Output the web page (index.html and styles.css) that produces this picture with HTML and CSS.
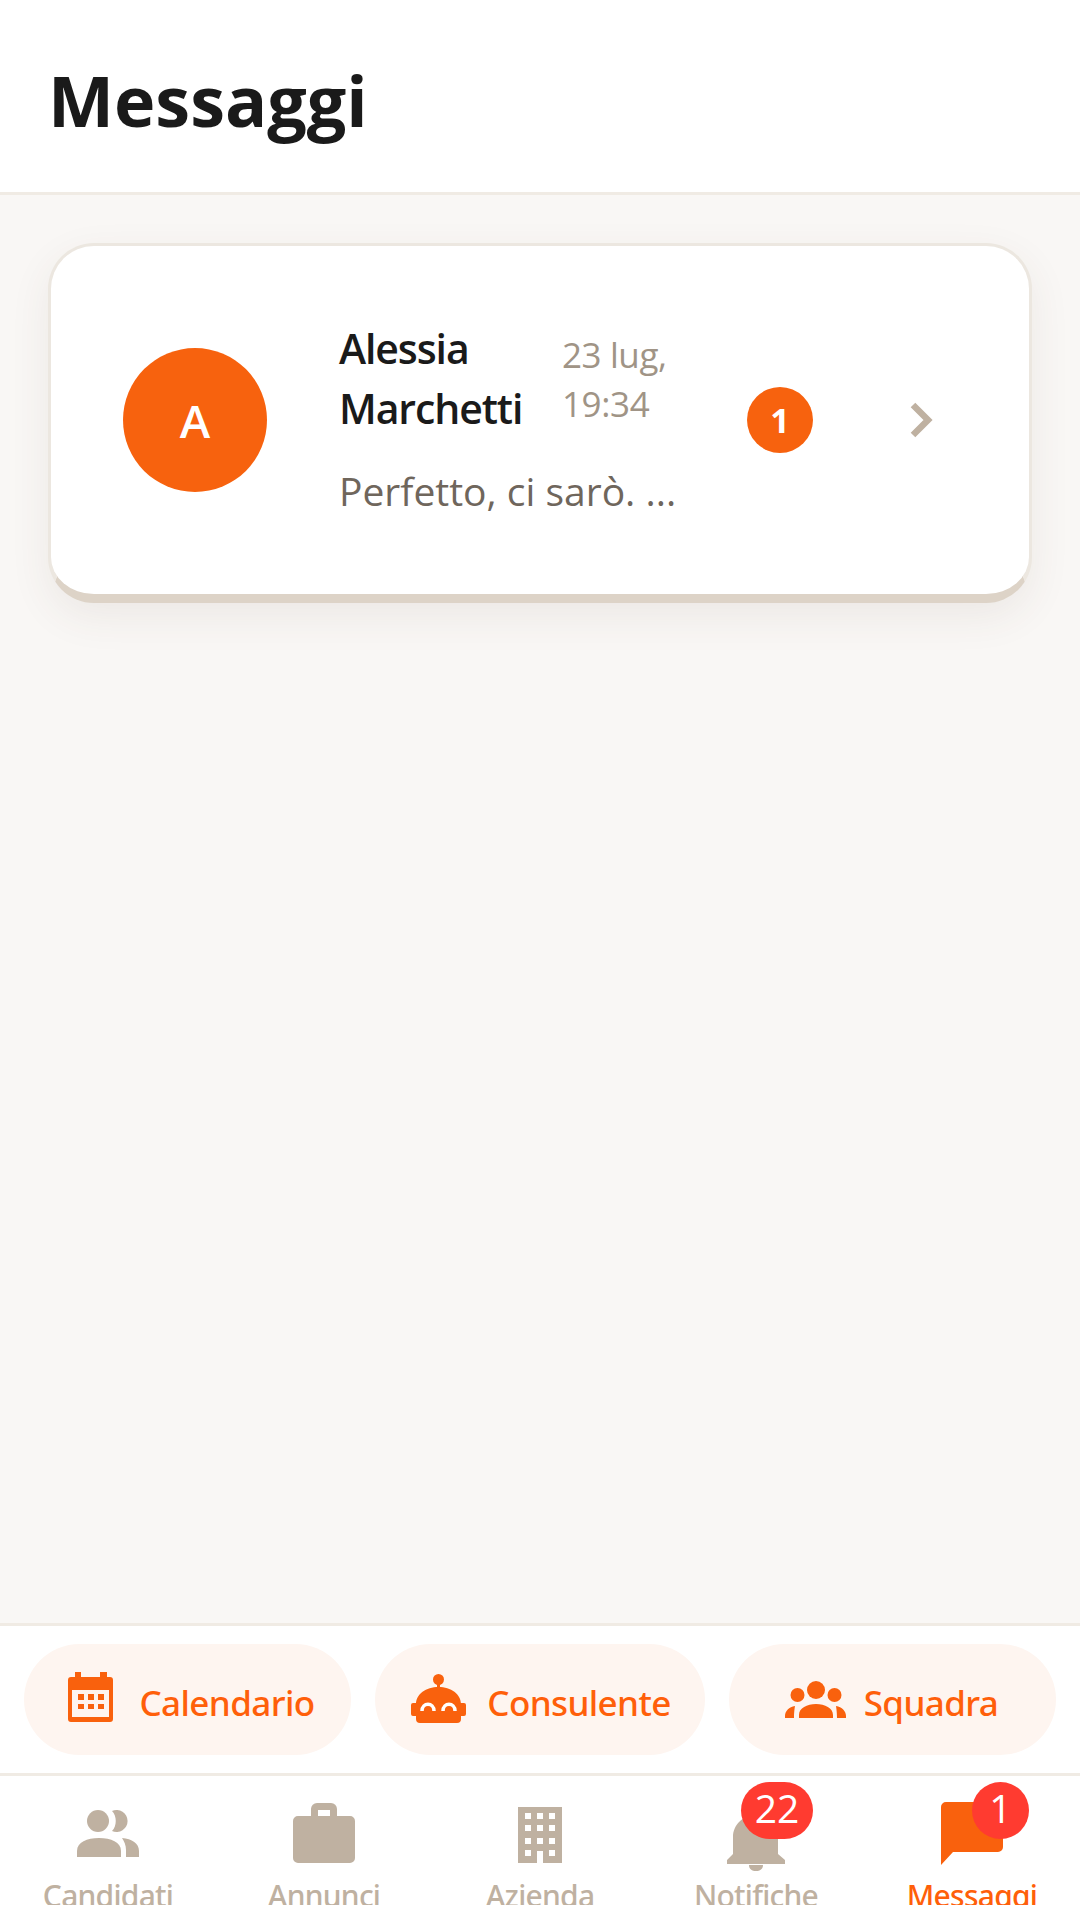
FILE: index.html
```html
<!DOCTYPE html>
<html lang="it">
<head>
<meta charset="utf-8">
<title>Messaggi</title>
<link rel="stylesheet" href="styles.css">
</head>
<body>
<div class="app">
  <header class="header"><h1 class="title">Messaggi</h1></header>
  <main class="main">
    <article class="card">
      <div class="avatar">A</div>
      <div class="content">
        <div class="head">
          <div class="name">Alessia Marchetti</div>
          <div class="time">23 lug, 19:34</div>
        </div>
        <div class="preview">Perfetto, ci sarò. ...</div>
      </div>
      <div class="count">1</div>
      <svg class="chevron" width="23" height="36" viewBox="0 0 23 36"><path d="M3 3l15 15L3 33" fill="none" stroke="#bfb1a1" stroke-width="6.5"/></svg>
    </article>
  </main>
  <section class="actions">
    <a class="pill pill-cal">
      <svg class="cal-icon" width="45" height="50" viewBox="0 0 45 50"><path fill="#f9610d" fill-rule="evenodd" d="M7 0h6v5h19V0h7v5h3a3 3 0 0 1 3 3v39a3 3 0 0 1-3 3H3a3 3 0 0 1-3-3V8a3 3 0 0 1 3-3h4zM4 18v27h37V18z"/><path fill="#f9610d" d="M10 22h6v6h-6zM20 22h6v6h-6zM30 22h6v6h-6zM10 32h6v5h-6zM20 32h6v5h-6zM30 32h6v5h-6z"/></svg>
      <span class="pill-text">Calendario</span>
    </a>
    <a class="pill pill-bot">
      <svg width="55" height="51" viewBox="0 0 55 51"><circle cx="27.500" cy="5.500" r="5.500" fill="#f9610d"/><path fill="#f9610d" d="M26 8h3v7h-3zM5 45V30C5 20 15 13 27.500 13S50 20 50 30v15a4 4 0 0 1-4 4H9a4 4 0 0 1-4-4zM2 29h4v13H2a2 2 0 0 1-2-2v-9a2 2 0 0 1 2-2zM49 29h4a2 2 0 0 1 2 2v9a2 2 0 0 1-2 2h-4z"/><path fill="none" stroke="#fff" stroke-width="3.500" d="M11 37c0-9 12-9 12 0M32 37c0-9 12-9 12 0"/></svg>
      <span class="pill-text">Consulente</span>
    </a>
    <a class="pill pill-team">
      <svg width="61" height="37" viewBox="0 0 61 37"><g fill="#f9610d"><circle cx="31" cy="9" r="9"/><circle cx="12.500" cy="14" r="7"/><circle cx="49.500" cy="14" r="7"/><path d="M14 37v-3c0-7 8-11 17-11s17 4 17 11v3zM0 37v-2c0-5 4-9 10-10 0 0-1 5-1 12zM61 37v-2c0-5-4-9-10-10 0 0 1 5 1 12z"/></g></svg>
      <span class="pill-text">Squadra</span>
    </a>
  </section>
  <nav class="nav">
    <a class="tab">
      <span class="tab-icon">
        <svg width="62" height="47" viewBox="0 0 62 47"><g fill="#bfb1a1"><circle cx="21" cy="11" r="11"/><path d="M0 47v-6c0-9 10-13 22-13s22 4 22 13v6zM35 1a11 11 0 1 1 0 20c5-5 5-15 0-20zM45 28c10 1 17 5 17 13v6H49v-7c0-5-2-9-4-12z"/></g></svg>
      </span>
      <span class="tab-label">Candidati</span>
    </a>
    <a class="tab">
      <span class="tab-icon">
        <svg width="62" height="60" viewBox="0 0 62 60"><path fill="#bfb1a1" fill-rule="evenodd" d="M18 13V6a6 6 0 0 1 6-6h14a6 6 0 0 1 6 6v7h13a5 5 0 0 1 5 5v37a5 5 0 0 1-5 5H5a5 5 0 0 1-5-5V18a5 5 0 0 1 5-5zM25 7v6h12V7z"/></svg>
      </span>
      <span class="tab-label">Annunci</span>
    </a>
    <a class="tab">
      <span class="tab-icon">
        <svg class="building-icon" width="44" height="56" viewBox="0 0 44 56"><path fill="#bfb1a1" fill-rule="evenodd" d="M0 0h44v56H25V44h-6v12H0zM7 6v6h6V6zM19 6v6h6V6zM31 6v6h6V6zM7 18v6h6v-6zM19 18v6h6v-6zM31 18v6h6v-6zM7 31v6h6v-6zM19 31v6h6v-6zM31 31v6h6v-6zM7 43v6h6v-6zM31 43v6h6v-6z"/></svg>
      </span>
      <span class="tab-label">Azienda</span>
    </a>
    <a class="tab">
      <span class="tab-icon">
        <svg class="bell-icon" width="58" height="56" viewBox="0 0 58 56"><path fill="#bfb1a1" d="M29 0c13 0 22 10 22 22v17l7 6v4H0v-4l6-6V22C6 10 16 0 29 0zM22 50h14c0 4-3 6-7 6s-7-2-7-6z"/></svg>
        <span class="dot dot-wide">22</span>
      </span>
      <span class="tab-label">Notifiche</span>
    </a>
    <a class="tab tab-active">
      <span class="tab-icon">
        <svg width="62" height="63" viewBox="0 0 62 63"><path fill="#f9610d" d="M5 0h52a5 5 0 0 1 5 5v40a5 5 0 0 1-5 5H12L0 63V5a5 5 0 0 1 5-5z"/></svg>
        <span class="dot">1</span>
      </span>
      <span class="tab-label">Messaggi</span>
    </a>
  </nav>
</div>
</body>
</html>
```
FILE: styles.css
```css
* { box-sizing: border-box; }
html, body { margin: 0; padding: 0; }
body { background: #fff; font-family: "Open Sans", "Noto Sans", sans-serif; }
.app { width: 1080px; height: 1920px; display: flex; flex-direction: column; overflow: hidden; }

.header { height: 195px; background: #fff; border-bottom: 3px solid #f0ebe4; padding: 54px 0 0 48px; flex: none; }
.title { margin: 0; font-size: 70px; line-height: 92px; font-weight: 700; color: #1a1a1a; letter-spacing: 0; }

.main { flex: 1; background: #f9f7f5; padding: 48px 48px 0; }
.card { height: 360px; background: #fff; border: 3px solid #ece7e0; border-bottom: 9px solid #ddd3c7; border-radius: 46px; box-shadow: 0 14px 40px rgba(90, 70, 50, .08); display: flex; align-items: center; padding-left: 72px; }
.avatar { width: 144px; height: 144px; border-radius: 50%; background: #f7620e; color: #fff; font-size: 46px; font-weight: 600; display: flex; align-items: center; justify-content: center; flex: none; }
.content { width: 408px; margin-left: 72px; padding-bottom: 4px; flex: none; }
.head { display: flex; align-items: center; }
.name { width: 223px; font-size: 41px; line-height: 60px; font-weight: 600; color: #1a1a1a; letter-spacing: -1.1px; flex: none; }
.time { width: 130px; font-size: 35px; line-height: 49px; color: #a09486; letter-spacing: -.4px; flex: none; position: relative; top: 1px; }
.preview { margin-top: 25px; font-size: 39px; line-height: 56px; color: #6f665c; letter-spacing: 0; white-space: nowrap; }
.count { width: 66px; height: 66px; border-radius: 50%; background: #f7620e; color: #fff; font-size: 34px; font-weight: 700; display: flex; align-items: center; justify-content: center; flex: none; }
.chevron { margin-left: 97px; flex: none; }

.actions { height: 153px; flex: none; background: #fff; border-top: 3px solid #f0ebe4; border-bottom: 3px solid #f0ebe4; padding: 18px 24px; display: flex; justify-content: space-between; }
.pill { height: 111px; border-radius: 56px; background: #fef5f0; color: #ff5f0a; font-family: "Noto Sans", "Open Sans", sans-serif; font-size: 35px; font-weight: 500; display: flex; align-items: center; justify-content: center; letter-spacing: -.6px; }
.pill-text { margin-top: 6px; }
.pill-cal { width: 327px; gap: 26px; padding-left: 8px; }
.pill-bot { width: 330px; gap: 21px; padding-left: 2px; }
.pill-team { width: 327px; gap: 18px; padding-right: 2px; }
.cal-icon { margin-top: -5px; }

.nav { height: 129px; margin-bottom: 15px; flex: none; background: #fff; display: flex; overflow: hidden; }
.tab { width: 216px; display: flex; flex-direction: column; align-items: center; }
.tab-icon { height: 100px; padding-top: 14px; flex: none; display: flex; align-items: center; justify-content: center; position: relative; }
.tab-label { font-family: "Noto Sans", "Open Sans", sans-serif; font-size: 30px; line-height: 40px; font-weight: 500; color: #bfb1a1; letter-spacing: -.75px; white-space: nowrap; flex: none; }
.tab-active .tab-label { color: #ff5f0a; }
.bell-icon { margin-top: 20px; }
.building-icon { margin-top: 4px; }
.dot { position: absolute; top: 6px; left: 31px; width: 57px; height: 57px; border-radius: 29px; background: #ff3b30; color: #fff; font-size: 39px; line-height: 52px; text-align: center; }
.dot-wide { left: 14px; width: 72px; }
```
